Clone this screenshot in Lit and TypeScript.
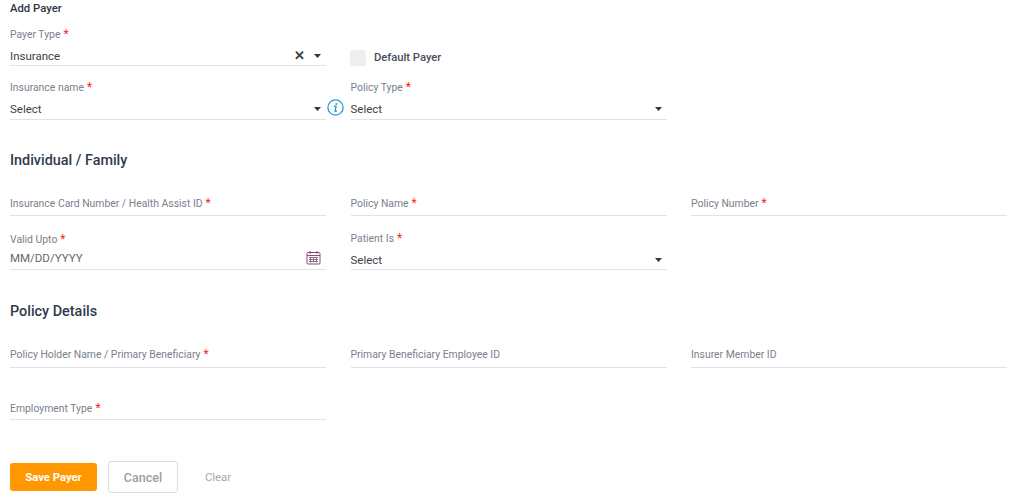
import { LitElement, html, css, nothing } from "lit";
import { customElement } from "lit/decorators.js";

const caret = html`<svg class="caret" width="7" height="4" viewBox="0 0 7 4"><path d="M0 0h7L3.5 4z" fill="#33383f"/></svg>`;

@customElement("app-root")
export class AppRoot extends LitElement {
  static styles = css`
    :host { display: block; width: 1024px; height: 502px; overflow: hidden; background: #fff; font-family: Roboto, "Liberation Sans", sans-serif; color: #3a3f47; box-sizing: border-box; padding: 0 18px 0 10px; }
    .title { font-size: 11.3px; font-weight: 500; line-height: 14px; padding-top: 2px; color: #2f3542; height: 14px; margin-bottom: 9px; }
    .row { display: grid; grid-template-columns: 316px 316px 316px; column-gap: 24.5px; }
    .field { display: flex; flex-direction: column; justify-content: flex-end; border-bottom: 1px solid #e0e2e6; position: relative; box-sizing: border-box; }
    .label { font-size: 10.4px; line-height: 14px; color: #7a808c; }
    .req { color: #f22; font-size: 12px; margin-left: 3px; }
    .value { display: flex; align-items: center; font-size: 11.5px; line-height: 18px; height: 18px; color: #3d4148; margin-top: 5px; margin-bottom: 1px; }
    .value span { flex: 1; }
    .r1 .value { margin-bottom: 0; }
    .r4 .value { margin-bottom: 0; margin-top: 5px; }
    .r4 .muted { margin-top: 2px; margin-bottom: 2px; }
    .muted { color: #62676f; }
    .caret { margin-left: 9px; margin-right: 5px; }
    .x { font-size: 13px; font-weight: 700; color: #3c4046; line-height: 12px; }
    .cal { margin-right: 5px; margin-bottom: 2px; }
    .info { position: absolute; right: -18px; bottom: 3px; }
    .check { display: flex; align-items: flex-end; gap: 8px; font-size: 11.2px; font-weight: 500; color: #474d5e; line-height: 16px; }
    .box { width: 16px; height: 16px; background: #eeeeef; border-radius: 3px; margin-left: -0.5px; }
    h2 { margin: 0; font-size: 14.4px; font-weight: 500; line-height: 18px; color: #2f3a4c; }
    .r1 { height: 41px; }
    .r2 { height: 54px; }
    .h1 { padding-top: 32px; height: 18px; }
    .r3 { height: 33px; margin-top: 13px; }
    .plain .label { margin-bottom: 4px; }
    .r4 { height: 54px; }
    .h2 { padding-top: 33px; height: 18px; }
    .r5 { height: 39px; margin-top: 8px; }
    .r5 .label { margin-bottom: 5px; }
    .r6 { height: 52px; }
    .r6 .label { margin-bottom: 3px; }
    .actions { display: flex; align-items: center; margin-top: 41px; }
    button { font-family: inherit; box-sizing: border-box; border-radius: 3px; cursor: pointer; }
    .save { width: 87px; height: 28px; background: #ff9800; color: #fff; border: 0; font-size: 11.3px; font-weight: 700; }
    .cancel { width: 70px; height: 32px; margin-left: 11px; background: #fff; border: 1px solid #dcdde0; color: #9b9da3; font-size: 12.5px; font-weight: 500; }
    .clear { margin-left: 27px; font-size: 11.3px; color: #a5a7ab; background: none; border: 0; padding: 0; }
  `;

  private label(t: string, req = true) {
    return html`<div class="label">${t}${req ? html`<span class="req">*</span>` : nothing}</div>`;
  }
  private plain(t: string, req = true) {
    return html`<div class="field plain">${this.label(t, req)}</div>`;
  }

  render() {
    return html`
      <div class="title">Add Payer</div>
      <div class="row r1">
        <div class="field">${this.label("Payer Type")}
          <div class="value"><span>Insurance</span><b class="x">✕</b>${caret}</div></div>
        <div class="check"><div class="box"></div>Default Payer</div>
      </div>
      <div class="row r2">
        <div class="field">${this.label("Insurance name")}
          <div class="value"><span>Select</span>${caret}</div>
          <svg class="info" width="17" height="17" viewBox="0 0 17 17" fill="none" stroke="#2e96e0"><circle cx="8.5" cy="8.5" r="7.6" stroke-width="1.3"/><circle cx="9.3" cy="4.9" r="1" fill="#2e96e0" stroke="none"/><path d="M6.9 7.6c.6-.4 2-.7 2.2-.2l-1 4.6c0 .6 1 .4 1.8-.2" stroke-width="1.3"/></svg></div>
        <div class="field">${this.label("Policy Type")}
          <div class="value"><span>Select</span>${caret}</div></div>
      </div>
      <div class="h1"><h2>Individual / Family</h2></div>
      <div class="row r3">
        ${this.plain("Insurance Card Number / Health Assist ID")}
        ${this.plain("Policy Name")}
        ${this.plain("Policy Number")}
      </div>
      <div class="row r4">
        <div class="field">${this.label("Valid Upto")}
          <div class="value muted"><span>MM/DD/YYYY</span>
            <svg class="cal" width="15" height="15" viewBox="0 0 15 15" fill="none" stroke="#864f78"><rect x="1" y="2.5" width="13" height="11.5" rx="1"/><path d="M1 5.5h13M4 1v3M11 1v3"/><path d="M3 7.5h9M3 9.5h9M3 11.5h9M4.5 7v5.5M7.5 7v5.5M10.5 7v5.5" stroke-width=".8"/></svg></div></div>
        <div class="field">${this.label("Patient Is")}
          <div class="value"><span>Select</span>${caret}</div></div>
      </div>
      <div class="h2"><h2>Policy Details</h2></div>
      <div class="row r5">
        ${this.plain("Policy Holder Name / Primary Beneficiary")}
        ${this.plain("Primary Beneficiary Employee ID", false)}
        ${this.plain("Insurer Member ID", false)}
      </div>
      <div class="row r6">${this.plain("Employment Type")}</div>
      <div class="actions">
        <button class="save">Save Payer</button>
        <button class="cancel">Cancel</button>
        <button class="clear">Clear</button>
      </div>
    `;
  }
}
